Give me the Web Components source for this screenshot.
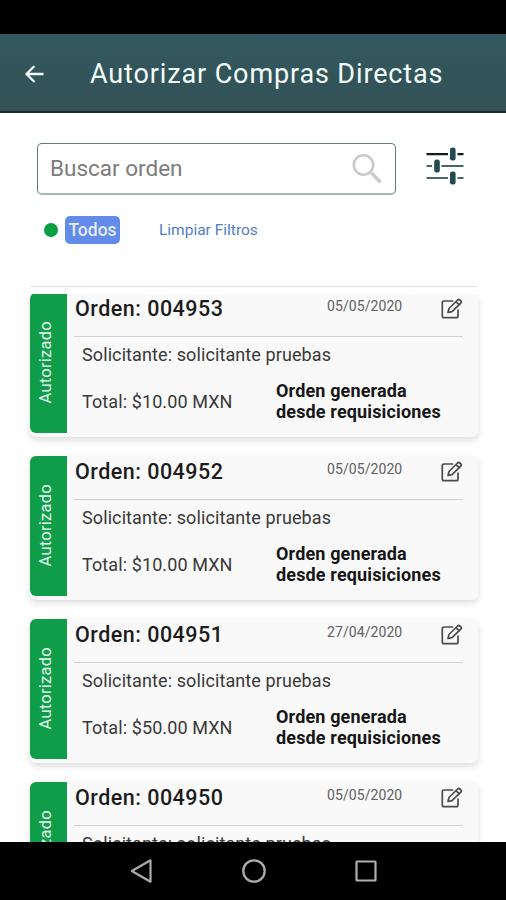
<!DOCTYPE html>
<html lang="es">
<head>
<meta charset="utf-8">
<title>Autorizar Compras Directas</title>
<style>
html,body{margin:0;height:100%;background:#fff;overflow:hidden}
body{font-family:Roboto,"Liberation Sans",sans-serif}
</style>
</head>
<body>
<orders-screen></orders-screen>
<script>
class BaseElement extends HTMLElement{
  connectedCallback(){
    if(this.shadowRoot)return;
    this.attachShadow({mode:'open'}).innerHTML=this.render();
  }
}

customElements.define('app-header',class extends BaseElement{
  render(){return `<style>
:host{display:flex;align-items:center;box-sizing:border-box;height:79px;flex:none;padding:0 0 0 24px;background:linear-gradient(#335960,#32555a 50%,#345256);border-bottom:2px solid #152b30;color:#f4fbfb}
svg{display:block;flex:none;margin-top:2px}
h1{margin:3px 0 0 45px;font-size:27px;line-height:34px;font-weight:400;letter-spacing:.87px;white-space:nowrap}
</style>
<svg width="21" height="20" viewBox="0 0 21 20" fill="none" stroke="#f1f8f8" stroke-width="2.3"><path d="M10.500 2 2.500 10l8 8M2.500 10h17"/></svg>
<h1><slot></slot></h1>`}
});

customElements.define('search-box',class extends BaseElement{
  render(){return `<style>
:host{display:flex;align-items:center;justify-content:space-between;box-sizing:border-box;width:359px;height:52px;border:1.5px solid #5f7c7b;border-bottom:2px solid #a3b7b3;border-radius:5px;padding:0 12px 0 12px;color:#7c7c7c;font-size:22.500px;background:#fff}
svg{display:block;flex:none;margin-top:2px}
</style>
<span><slot></slot></span>
<svg width="32" height="32" viewBox="0 0 32 32" fill="none" stroke="#c9c9c9"><circle cx="12.500" cy="12" r="9.700" stroke-width="2.600"/><path d="m20.500 20 9 9.200" stroke-width="3.600"/></svg>`}
});

customElements.define('filter-button',class extends BaseElement{
  render(){return `<style>:host{display:block}svg{display:block}</style>
<svg width="38" height="38" viewBox="0 0 38 38"><path d="M.5 7.200H22M31.500 7.200H37.500" stroke="#121c1d" stroke-width="2.200"/><path d="M.5 19H6M15.500 19H37.500M.5 31H22M31.500 31H37.500" stroke="#49666a" stroke-width="2.200"/><g fill="#234b50"><rect x="24" y=".6" width="5.600" height="13" rx="2.300"/><rect x="8.200" y="12.600" width="5.600" height="13" rx="2.300"/><rect x="24" y="24.500" width="5.600" height="13" rx="2.300"/></g></svg>`}
});

customElements.define('filter-bar',class extends BaseElement{
  render(){return `<style>
:host{display:flex;align-items:center;height:28px;padding-left:44px;font-size:15.500px}
i{width:14px;height:14px;border-radius:50%;background:#05a044;margin-right:7px}
b{box-sizing:border-box;width:55px;height:28px;border-radius:5px;background:#628bea;color:#e4edfd;font-weight:500;font-size:17.500px;line-height:28px;text-align:center}
span{margin-left:39px;color:#5080c8;white-space:nowrap}
</style><i></i><b>Todos</b><span>Limpiar Filtros</span>`}
});

customElements.define('status-strip',class extends BaseElement{
  render(){return `<style>
:host{display:flex;flex:none;align-items:center;justify-content:center;width:37px;height:140px;background:#0f9d4a;border-radius:6px 0 0 6px;color:#e6f8ec}
span{writing-mode:vertical-rl;transform:rotate(180deg);font-size:16.500px;letter-spacing:.25px;line-height:20px;white-space:nowrap;margin:0 6px 2px 0}
</style><span><slot></slot></span>`}
});

customElements.define('order-card',class extends BaseElement{
  render(){
    const a=n=>this.getAttribute(n);
    return `<style>
:host{display:flex;box-sizing:border-box;width:448px;height:144px;flex:none;border-radius:6px;background:#f9f9f9;box-shadow:0 3px 7px rgba(0,0,0,.14);color:#333}
main{flex:1;padding:0 15px 0 7px}
header{display:flex;align-items:flex-start;box-sizing:border-box;height:44px;border-bottom:1.500px solid #d0d0d0;padding-top:4px}
h2{margin:0 0 0 1px;width:252px;flex:none;font-size:21.500px;letter-spacing:.48px;line-height:24px;font-weight:500;color:#1c1c1c;white-space:nowrap}
time{font-size:14px;letter-spacing:.08px;line-height:18px;color:#606060;width:114px;flex:none}
svg{display:block;flex:none;margin-top:1px}
.who,.total{font-size:18px;letter-spacing:.1px;line-height:22px;color:#383838;white-space:nowrap}
.who{margin:7px 0 0 8px}
.row{display:flex;align-items:center;margin:14px 0 0 8px}
.total{width:194px;padding-top:1px}
strong{font-size:18px;letter-spacing:.15px;line-height:21px;font-weight:700;color:#161616;white-space:nowrap}
</style>
<status-strip>Autorizado</status-strip>
<main>
<header><h2>Orden: ${a('number')}</h2><time>${a('date')}</time>
<svg width="22" height="22" viewBox="0 0 22 22" fill="none" stroke="#4b4b4b" stroke-width="1.700" stroke-linejoin="round" stroke-linecap="round"><path d="M11.500 3H3Q1.300 3 1.300 4.700V18Q1.300 19.700 3 19.700H15.300Q17 19.700 17 18V12"/><path d="m7 14.500 1-4 8.600-8.500q1.100-1 2.200 0l1 .9q1.100 1.100 0 2.300L11 13.700ZM15 3.700l3.200 3.200"/></svg></header>
<div class="who">Solicitante: solicitante pruebas</div>
<div class="row"><span class="total">Total: ${a('total')} MXN</span><strong>Orden generada<br>desde requisiciones</strong></div>
</main>`}
});

customElements.define('system-nav',class extends BaseElement{
  render(){return `<style>
:host{display:flex;align-items:center;gap:88px;box-sizing:border-box;height:58px;padding-left:130px;background:#000;flex:none}
svg{display:block}
</style>
<svg width="24" height="26" viewBox="0 0 24 26"><path d="M1.800 13 20.500 2.300V23.700Z" fill="none" stroke="#aaa" stroke-width="2.200" stroke-linejoin="round"/></svg>
<svg width="24" height="24" viewBox="0 0 24 24"><circle cx="12" cy="12" r="10.700" fill="none" stroke="#aaa" stroke-width="2.300"/></svg>
<svg width="24" height="24" viewBox="0 0 24 24"><rect x="2.500" y="2.500" width="19" height="19" fill="none" stroke="#b0b0b0" stroke-width="2.200" rx=".5"/></svg>`}
});

customElements.define('orders-screen',class extends BaseElement{
  render(){return `<style>
:host{display:flex;flex-direction:column;width:506px;height:900px;overflow:hidden;background:#fff}
.status{height:34px;background:#000;flex:none}
.search{display:flex;align-items:center;gap:30px;padding:29px 0 0 37px;height:52px;flex:none}
search-box{margin-top:1px}
filter-button{margin-top:-4px}
filter-bar{margin-top:21.500px;flex:none}
.rule{height:1px;background:#dedede;margin:42.500px 29px 0 30px;flex:none}
.list{flex:1;min-height:0;overflow:hidden;margin-top:7px;padding-left:30px;display:flex;flex-direction:column;gap:19.100px}
order-card:first-child{margin-top:-1px}
</style>
<div class="status"></div>
<app-header>Autorizar Compras Directas</app-header>
<div class="search"><search-box>Buscar orden</search-box><filter-button></filter-button></div>
<filter-bar></filter-bar>
<div class="rule"></div>
<div class="list">
<order-card number="004953" date="05/05/2020" total="$10.00"></order-card>
<order-card number="004952" date="05/05/2020" total="$10.00"></order-card>
<order-card number="004951" date="27/04/2020" total="$50.00"></order-card>
<order-card number="004950" date="05/05/2020" total="$10.00"></order-card>
</div>
<system-nav></system-nav>`}
});
</script>
</body>
</html>
